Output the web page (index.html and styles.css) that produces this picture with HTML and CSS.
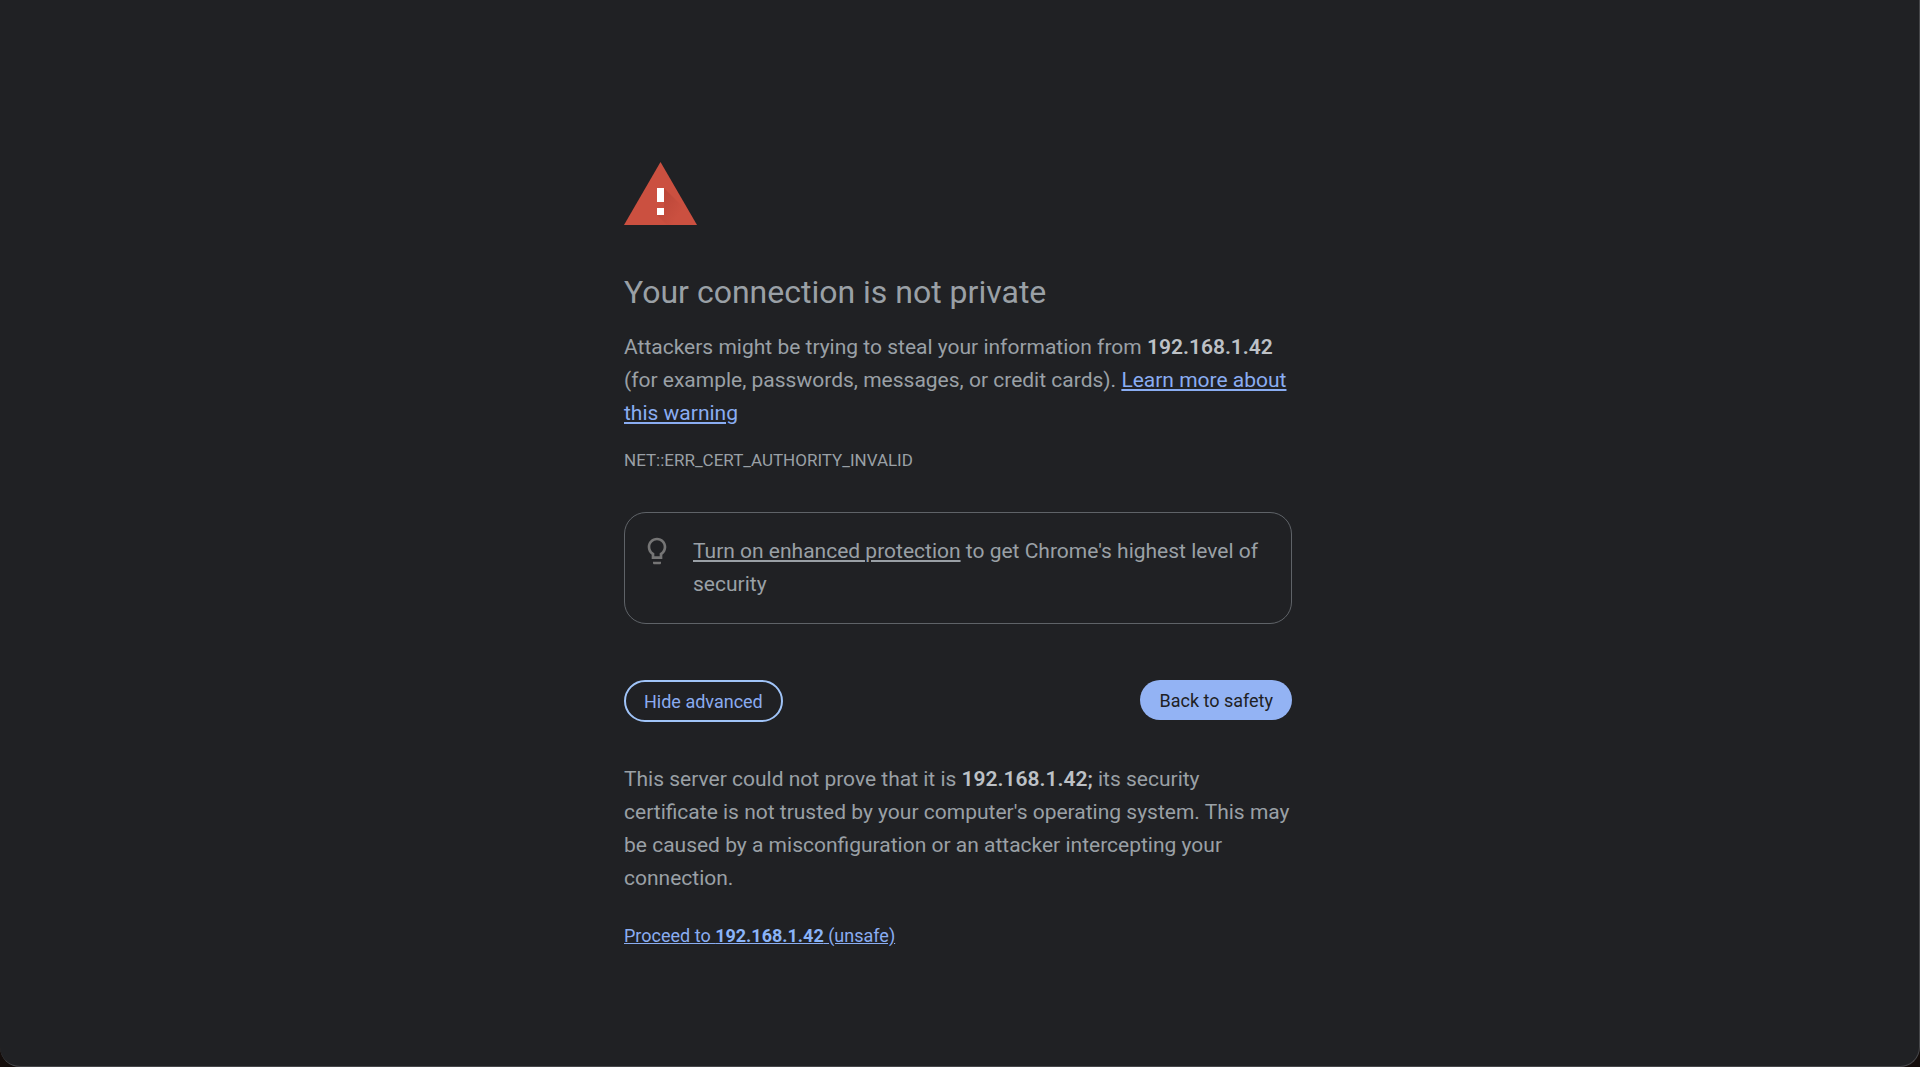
FILE: index.html
```html
<!DOCTYPE html>
<html lang="en">
<head>
    <meta charset="UTF-8">
    <meta name="viewport" content="width=device-width, initial-scale=1.0">
    <title>Privacy error</title>
    <link rel="stylesheet" href="styles.css">
</head>
<body>
    <div class="window">
        <main class="interstitial">
            <svg class="warning-icon" viewBox="0 0 74 64" aria-hidden="true">
                <defs>
                    <linearGradient id="shade" x1="0" y1="0" x2="1" y2="1">
                        <stop offset="0" stop-color="#a83c30" stop-opacity="0.6"/>
                        <stop offset="0.8" stop-color="#a83c30" stop-opacity="0"/>
                    </linearGradient>
                </defs>
                <path fill="#cb5040" d="M36.500 0 73 63H0z"/>
                <path fill="url(#shade)" d="M40 26 58 44V63H43L33 53V46H40z"/>
                <path fill="#fff" d="M33 26h7v14h-7zM33 46h7v7h-7z"/>
            </svg>

            <h1>Your connection is not private</h1>
            <p>Attackers might be trying to steal your information from <strong>192.168.1.42</strong> (for example, passwords, messages, or credit cards). <a href="#">Learn more about this warning</a></p>
            <div class="error-code">NET::ERR_CERT_AUTHORITY_INVALID</div>

            <div class="promo">
                <svg class="bulb-icon" viewBox="0 0 24 24" aria-hidden="true">
                    <path fill="#757575" d="M9 21c0 .55.45 1 1 1h4c.55 0 1-.45 1-1v-1H9v1zm3-19C8.140 2 5 5.140 5 9c0 2.380 1.190 4.470 3 5.740V18h8v-3.260c1.810-1.270 3-3.360 3-5.740 0-3.860-3.140-7-7-7zm2.850 11.100l-.85.6V16h-4v-2.300l-.85-.6C7.800 12.160 7 10.630 7 9c0-2.760 2.240-5 5-5s5 2.240 5 5c0 1.630-.8 3.160-2.150 4.100z"/>
                </svg>
                <p><a href="#">Turn on enhanced protection</a> to get Chrome's highest level of security</p>
            </div>

            <div class="buttons">
                <button type="button" class="secondary">Hide advanced</button>
                <button type="button" class="primary">Back to safety</button>
            </div>

            <p>This server could not prove that it is <strong>192.168.1.42;</strong> its security certificate is not trusted by your computer's operating system. This may be caused by a misconfiguration or an attacker intercepting your connection.</p>
            <a class="proceed" href="#">Proceed to <b>192.168.1.42</b> (unsafe)</a>
        </main>
    </div>
</body>
</html>
```

FILE: styles.css
```css
* {
    box-sizing: border-box;
}
body {
    margin: 0;
    background: #140d0b;
    color: #9aa0a6;
    font-family: Roboto, "Liberation Sans", sans-serif;
    font-size: 21px;
    line-height: 33px;
}
.window {
    min-height: 100vh;
    padding-right: 3px;
    background: #202124;
    border: solid #46474a;
    border-width: 0 1px 1px 0;
    border-radius: 0 0 20px 20px;
}
.interstitial {
    width: 100%;
    max-width: 668px;
    margin: 0 auto;
    padding-top: 162px;
}
.warning-icon {
    display: block;
    width: 74px;
    height: 64px;
}
h1 {
    margin: 45px 0 18px;
    font-size: 32px;
    font-weight: 400;
    line-height: 42px;
}
p {
    margin: 0;
}
a {
    color: #8aadf2;
}
strong {
    color: #bdc1c6;
    font-weight: 600;
}
.error-code {
    margin-top: 16px;
    font-size: 17px;
    line-height: 28px;
}
.promo {
    display: flex;
    gap: 20px;
    margin: 38px 0 56px;
    padding: 22px 16px;
    border: 1px solid #5f6368;
    border-radius: 22px;
}
.promo a {
    color: inherit;
}
.bulb-icon {
    flex: none;
    width: 32px;
    height: 32px;
}
.buttons {
    display: flex;
    align-items: flex-start;
    justify-content: space-between;
    margin-bottom: 41px;
}
button {
    height: 40px;
    padding: 0 19px;
    border: 0;
    border-radius: 21px;
    font: inherit;
    font-size: 18px;
    cursor: pointer;
}
.primary {
    background: #93b3f4;
    color: #202124;
}
.secondary {
    height: 42px;
    padding: 0 18px;
    border: 2px solid #a0c4f8;
    background: none;
    color: #8aabf0;
}
.proceed {
    display: inline-block;
    margin-top: 24px;
    font-size: 18px;
}
.proceed b {
    color: #8ab4f8;
}
```
